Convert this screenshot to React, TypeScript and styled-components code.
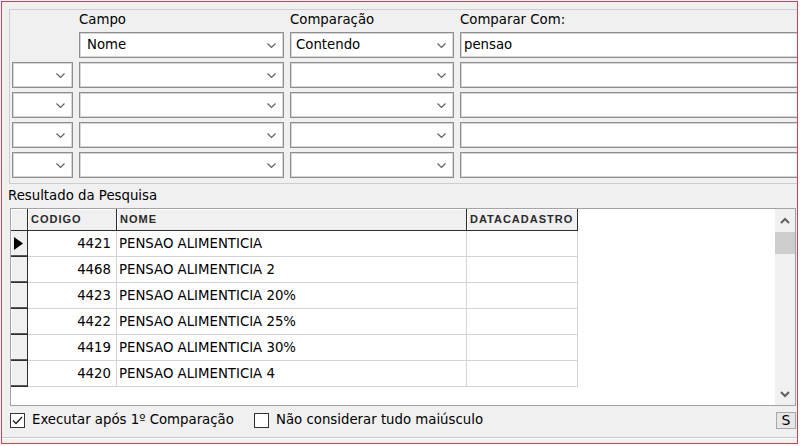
import React from "react";
import styled, { createGlobalStyle } from "styled-components";

const GlobalStyle = createGlobalStyle`
  html, body { margin: 0; padding: 0; background: #ffffff; }
  body { font-family: "DejaVu Sans", "Liberation Sans", Arial, sans-serif; font-size: 13.3px; color: #000; }
  * { box-sizing: border-box; }
`;

const Frame = styled.div`
  margin: 1px 0 0 1px;
  width: 797px;
  height: 443px;
  border: 1px solid #dc3c44;
  background: #f0f0f0;
  overflow: hidden;
  display: flex;
  flex-direction: column;
`;

const FilterPanel = styled.div`
  margin: 7px 0 0 7px;
  border-top: 1px solid #cdcdcd;
  border-left: 1px solid #cdcdcd;
  border-bottom: 1px solid #cdcdcd;
  padding: 0 0 5px 2px;
  display: grid;
  grid-template-columns: 61px 205px 164px 1fr;
  grid-template-rows: 18px repeat(5, 26px);
  column-gap: 6px;
  row-gap: 4px;
`;

const ColumnLabel = styled.div`
  display: flex;
  align-items: flex-end;
  line-height: 16px;
  white-space: nowrap;
`;

const Combo = styled.div<{ $pad?: number }>`
  height: 26px;
  background: #ffffff;
  border: 1px solid #8e8e8e;
  box-shadow: inset 0 0 0 1px #d6d6d6;
  display: flex;
  align-items: center;
  padding: 0 7px 0 ${(p) => p.$pad ?? 5}px;
  line-height: 24px;
  white-space: nowrap;
`;

const ComboText = styled.span`
  flex: 1;
  overflow: hidden;
`;

const TextBox = styled.div`
  height: 26px;
  margin-right: -6px;
  background: #ffffff;
  border: 1px solid #8e8e8e;
  box-shadow: inset 0 0 0 1px #d6d6d6;
  padding: 0 3px;
  line-height: 24px;
  white-space: nowrap;
`;

const SectionTitle = styled.div`
  margin-left: 6px;
  height: 24px;
  padding-top: 1px;
  line-height: 22px;
`;

const GridBox = styled.div`
  margin-left: 8px;
  width: 786px;
  height: 198px;
  border: 1px solid #a3a3a3;
  background: #ffffff;
  display: flex;
`;

const TableArea = styled.div`
  flex: 1;
  display: grid;
  grid-template-columns: 17px 89px 350px 111px;
  grid-auto-rows: 26px;
  grid-template-rows: 22px;
  align-content: start;
`;

const HeadCell = styled.div`
  background: #f0f0f0;
  border-right: 1px solid #2e2e2e;
  border-bottom: 1px solid #2e2e2e;
  box-shadow: inset 1px 1px 0 #ffffff;
  padding-left: 3px;
  font-family: "Liberation Sans", Arial, sans-serif;
  font-weight: bold;
  font-size: 11px;
  letter-spacing: 1px;
  color: #2a2a2a;
  line-height: 21px;
  white-space: nowrap;
  overflow: hidden;
`;

const Indicator = styled.div`
  background: #f0f0f0;
  border-right: 1px solid #2e2e2e;
  border-bottom: 1px solid #2e2e2e;
  box-shadow: inset 0 -1px 0 #5a5a5a, inset 1px 0 0 #ffffff;
  display: flex;
  align-items: center;
  padding-left: 3px;
`;

const DataCell = styled.div<{ $align?: "left" | "right" }>`
  border-right: 1px solid #d4d4d4;
  border-bottom: 1px solid #d4d4d4;
  text-align: ${(p) => p.$align ?? "left"};
  padding: 0 ${(p) => (p.$align === "right" ? 5 : 0)}px 0 ${(p) => (p.$align === "right" ? 0 : 2)}px;
  line-height: 25px;
  white-space: nowrap;
  overflow: hidden;
`;

const ScrollBar = styled.div`
  width: 20px;
  background: #f0f0f0;
  display: flex;
  flex-direction: column;
`;

const ScrollButton = styled.div`
  height: 22px;
  display: flex;
  align-items: center;
  justify-content: center;
`;

const ScrollThumb = styled.div`
  margin-top: 1px;
  height: 22px;
  background: #cdcdcd;
`;

const ScrollTrack = styled.div`
  flex: 1;
`;

const Footer = styled.div`
  height: 32px;
  padding: 6px 1px 0 8px;
  display: flex;
  align-items: flex-start;
  border-bottom: 1px solid #c9c9c9;
  box-shadow: 0 1px 0 #ffffff;
`;

const CheckGroup = styled.label<{ $width?: number }>`
  display: flex;
  align-items: center;
  height: 16px;
  gap: 7px;
  width: ${(p) => (p.$width ? `${p.$width}px` : "auto")};
  white-space: nowrap;
  line-height: 16px;
`;

const CheckSquare = styled.span`
  width: 15px;
  height: 15px;
  border: 1px solid #333333;
  background: #ffffff;
  display: flex;
  align-items: center;
  justify-content: center;
  flex: none;
`;

const Spacer = styled.div`
  flex: 1;
`;

const SmallButton = styled.div`
  width: 20px;
  height: 17px;
  border: 1px solid #a8a8a8;
  background: #e6e6e6;
  display: flex;
  align-items: center;
  justify-content: center;
  font-size: 14px;
  line-height: 15px;
`;

const Chevron = () => (
  <svg width="9" height="5" viewBox="0 0 9 5">
    <polyline points="0.5,0.5 4.5,4.5 8.5,0.5" fill="none" stroke="#5c5c5c" strokeWidth="1.1" />
  </svg>
);

const ScrollArrow = ({ up }: { up?: boolean }) => (
  <svg width="10" height="7" viewBox="0 0 10 7">
    <polyline
      points={up ? "1,6 5,2 9,6" : "1,1 5,5 9,1"}
      fill="none"
      stroke="#606060"
      strokeWidth="2"
    />
  </svg>
);

const CheckMark = () => (
  <svg width="11" height="9" viewBox="0 0 11 9">
    <polyline points="1,4.5 4,7.5 10,1" fill="none" stroke="#222" strokeWidth="1.3" />
  </svg>
);

const RowPointer = () => (
  <svg width="9" height="13" viewBox="0 0 9 13">
    <polygon points="0,0 9,6.5 0,13" fill="#000" />
  </svg>
);

const rows = [
  { code: "4421", name: "PENSAO ALIMENTICIA" },
  { code: "4468", name: "PENSAO ALIMENTICIA 2" },
  { code: "4423", name: "PENSAO ALIMENTICIA 20%" },
  { code: "4422", name: "PENSAO ALIMENTICIA 25%" },
  { code: "4419", name: "PENSAO ALIMENTICIA 30%" },
  { code: "4420", name: "PENSAO ALIMENTICIA 4" },
];

export default function App() {
  return (
    <>
      <GlobalStyle />
      <Frame>
        <FilterPanel>
          <div />
          <ColumnLabel>Campo</ColumnLabel>
          <ColumnLabel>Comparação</ColumnLabel>
          <ColumnLabel>Comparar Com:</ColumnLabel>

          <div />
          <Combo $pad={7}>
            <ComboText>Nome</ComboText>
            <Chevron />
          </Combo>
          <Combo>
            <ComboText>Contendo</ComboText>
            <Chevron />
          </Combo>
          <TextBox>pensao</TextBox>

          {[0, 1, 2, 3].map((i) => (
            <React.Fragment key={i}>
              <Combo>
                <ComboText />
                <Chevron />
              </Combo>
              <Combo>
                <ComboText />
                <Chevron />
              </Combo>
              <Combo>
                <ComboText />
                <Chevron />
              </Combo>
              <TextBox />
            </React.Fragment>
          ))}
        </FilterPanel>

        <SectionTitle>Resultado da Pesquisa</SectionTitle>

        <GridBox>
          <TableArea>
            <HeadCell />
            <HeadCell>CODIGO</HeadCell>
            <HeadCell>NOME</HeadCell>
            <HeadCell>DATACADASTRO</HeadCell>
            {rows.map((r, i) => (
              <React.Fragment key={r.code}>
                <Indicator>{i === 0 ? <RowPointer /> : null}</Indicator>
                <DataCell $align="right">{r.code}</DataCell>
                <DataCell>{r.name}</DataCell>
                <DataCell />
              </React.Fragment>
            ))}
          </TableArea>
          <ScrollBar>
            <ScrollButton>
              <ScrollArrow up />
            </ScrollButton>
            <ScrollThumb />
            <ScrollTrack />
            <ScrollButton>
              <ScrollArrow />
            </ScrollButton>
          </ScrollBar>
        </GridBox>

        <Footer>
          <CheckGroup $width={244}>
            <CheckSquare>
              <CheckMark />
            </CheckSquare>
            Executar após 1º Comparação
          </CheckGroup>
          <CheckGroup>
            <CheckSquare />
            Não considerar tudo maiúsculo
          </CheckGroup>
          <Spacer />
          <SmallButton>S</SmallButton>
        </Footer>
      </Frame>
    </>
  );
}
